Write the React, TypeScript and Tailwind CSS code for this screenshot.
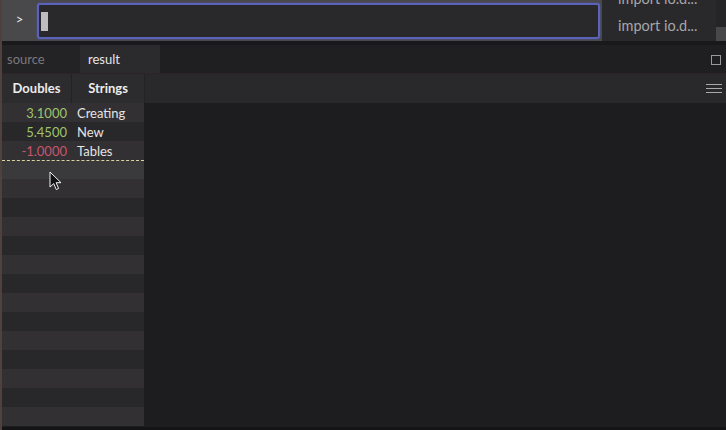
import React from "react";

const rows = [
  { d: "3.1000", s: "Creating", neg: false },
  { d: "5.4500", s: "New", neg: false },
  { d: "-1.0000", s: "Tables", neg: true },
];

export default function App() {
  const total = 17;
  return (
    <div
      className="relative w-[726px] h-[430px] overflow-hidden bg-[#1d1c1f] flex flex-col border-l-2 border-[#4f423d]"
      style={{ fontFamily: "Lato, 'Open Sans', sans-serif" }}
    >
      {/* top bar */}
      <div className="h-[41px] bg-[#49484a] flex shrink-0">
        <div className="w-[35px] flex items-center justify-center text-[13px] text-[#e8e8e8] pb-[2px]">&gt;</div>
        <div className="w-[563px] mt-[3px] h-[36px] rounded-[3px] border-2 border-[#5a63b8] bg-[#29282b] flex items-center pl-[2px] shadow-[0_0_2px_#4d57a8]">
          <div className="w-[7px] h-[19px] bg-[#bdbdbd]" />
        </div>
        <div className="w-[2px]" />
        <div className="w-[114px] bg-[#29282b] flex flex-col overflow-hidden text-[14.5px] text-[#a7a6a8]">
          <div className="h-[27px] -mt-[15px] flex items-center pl-[16px] whitespace-nowrap">import io.d...</div>
          <div className="h-[27px] flex items-center pl-[16px] whitespace-nowrap">import io.d...</div>
        </div>
        <div className="flex-1 bg-[#252427] flex flex-col">
          <div className="h-[27px]" />
          <div className="flex-1 bg-[#48474a]" />
        </div>
      </div>
      <div className="h-[4px] bg-[#19181b] shrink-0" />
      {/* tab bar */}
      <div className="h-[29px] bg-[#1f1e21] flex shrink-0 text-[13px] border-b border-[#2d2426]">
        <div className="w-[78px] bg-[#232225] flex items-center pl-[5px] pt-[2px] text-[#7a797c]">source</div>
        <div className="w-[80px] bg-[#2b2a2d] flex items-center pl-[8px] pt-[2px] text-[#e6e6e6]">result</div>
        <div className="flex-1 flex items-center justify-end pr-[5px] pt-[2px]">
          <div className="w-[10px] h-[10px] border border-[#9a999c]" />
        </div>
      </div>
      {/* header */}
      <div className="h-[29px] bg-[#29282b] flex shrink-0 text-[13px] font-bold text-[#ececec]">
        <div className="w-[70px] bg-[#2c2b2e] flex items-center justify-center pt-[1px] border-r border-[#222124]">Doubles</div>
        <div className="w-[72px] bg-[#2c2b2e] flex items-center justify-center pt-[1px]">Strings</div>
        <div className="flex-1 flex items-center justify-end pr-[4px] border-l border-[#232225]">
          <div className="flex flex-col gap-[3px]">
            <div className="w-[16px] h-[1px] bg-[#a9a8ab]" />
            <div className="w-[16px] h-[1px] bg-[#a9a8ab]" />
            <div className="w-[16px] h-[1px] bg-[#a9a8ab]" />
          </div>
        </div>
      </div>
      {/* body */}
      <div className="flex-1 flex min-h-0">
        <div className="w-[142px] flex flex-col text-[13px]">
          {Array.from({ length: total }).map((_, i) => {
            const r = rows[i];
            const bg =
              i === 3 ? "bg-[#3a393c]" : i % 2 === 0 ? "bg-[#323033]" : "bg-[#28272a]";
            return (
              <div
                key={i}
                className={`h-[19px] shrink-0 flex items-center pt-[2px] ${bg} ${i === 3 ? "border-t border-dashed border-[#dcd29c]" : ""}`}
              >
                {r ? (
                  <>
                    <div className={`w-[65px] text-right ${r.neg ? "text-[#c9566b]" : "text-[#9fc46a]"}`}>{r.d}</div>
                    <div className="pl-[10px] text-[#e4e4e4]">{r.s}</div>
                  </>
                ) : null}
              </div>
            );
          })}
        </div>
        <div className="flex-1 bg-[#1d1c1f]" />
      </div>
      <div className="h-[3px] bg-[#141316] shrink-0" />
      {/* mouse pointer */}
      <svg className="absolute left-[47px] top-[171px]" width="14" height="21" viewBox="0 0 14 21">
        <path d="M1 1 L1 16 L4.7 12.6 L7.3 18.5 L9.6 17.5 L7.1 11.7 L12 11.7 Z" fill="#111" stroke="#f2f2f2" strokeWidth="1" strokeLinejoin="round" />
      </svg>
    </div>
  );
}
